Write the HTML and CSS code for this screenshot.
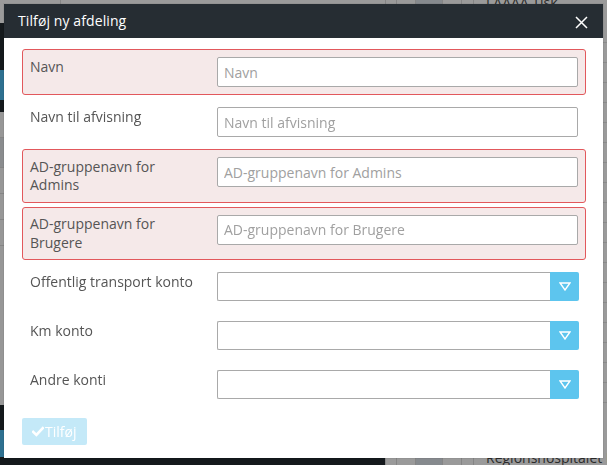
FILE: index.html
```html
<!DOCTYPE html>
<html lang="da">
<head>
<meta charset="utf-8">
<title>Tilføj ny afdeling</title>
<link rel="stylesheet" href="styles.css">
</head>
<body>
<div class="page">
  <div class="bg-left">
    <div class="bg-top"><span class="bg-num">50000</span></div>
    <div class="bg-dark"><div class="bg-blue"></div></div>
    <div class="bg-list">
      <div class="bg-row"></div><div class="bg-row tall"></div><div class="bg-row"></div><div class="bg-row"></div><div class="bg-row"></div>
    </div>
    <div class="bg-dark foot"><div class="bg-blue"></div></div>
  </div>
  <div class="bg-right">
    <div class="bg-cols top">
      <span class="c c1"></span><span class="c c2"></span><span class="c c3"></span><span class="c c4"></span><span class="c c5"></span><span class="c c6 txt">LAAAA Tisk</span>
    </div>
    <div class="bg-lines">
      <div></div><div></div><div></div><div></div><div></div><div></div><div></div><div></div><div></div><div></div><div></div><div></div><div></div><div></div><div></div><div></div><div></div><div></div><div></div>
    </div>
    <div class="bg-cols bottom">
      <span class="c c1"></span><span class="c c2"></span><span class="c c3"></span><span class="c c4"></span><span class="c c5"></span><span class="c c6 txt">Regionshospitalet I</span>
    </div>
  </div>
</div>

<div class="overlay">
  <div class="modal">
    <div class="modal-header">
      <h4 class="modal-title">Tilføj ny afdeling</h4>
      <span class="close" aria-label="Luk">
        <svg width="13" height="13" viewBox="0 0 13 13"><path d="M1 1L12 12M12 1L1 12" stroke="#fff" stroke-width="1.5" fill="none"/></svg>
      </span>
    </div>
    <form class="modal-body">
      <div class="form-row error">
        <label class="form-label">Navn</label>
        <input class="form-input" type="text" placeholder="Navn">
      </div>
      <div class="form-row">
        <label class="form-label">Navn til afvisning</label>
        <input class="form-input" type="text" placeholder="Navn til afvisning">
      </div>
      <div class="form-row error">
        <label class="form-label">AD-gruppenavn for Admins</label>
        <input class="form-input" type="text" placeholder="AD-gruppenavn for Admins">
      </div>
      <div class="form-row error">
        <label class="form-label">AD-gruppenavn for Brugere</label>
        <input class="form-input" type="text" placeholder="AD-gruppenavn for Brugere">
      </div>
      <div class="form-row sel">
        <label class="form-label">Offentlig transport konto</label>
        <div class="select"><span class="select-value"></span><span class="select-btn"><svg width="12" height="9" viewBox="0 0 12 9"><path d="M1 1H11L6 8Z" stroke="#fff" stroke-width="1.4" fill="none"/></svg></span></div>
      </div>
      <div class="form-row sel">
        <label class="form-label">Km konto</label>
        <div class="select"><span class="select-value"></span><span class="select-btn"><svg width="12" height="9" viewBox="0 0 12 9"><path d="M1 1H11L6 8Z" stroke="#fff" stroke-width="1.4" fill="none"/></svg></span></div>
      </div>
      <div class="form-row sel">
        <label class="form-label">Andre konti</label>
        <div class="select"><span class="select-value"></span><span class="select-btn"><svg width="12" height="9" viewBox="0 0 12 9"><path d="M1 1H11L6 8Z" stroke="#fff" stroke-width="1.4" fill="none"/></svg></span></div>
      </div>
    </form>
    <div class="modal-footer">
      <button class="btn-add" type="button" disabled>
        <svg width="12" height="11" viewBox="0 0 12 11"><path d="M1.2 5.8L4.4 9L10.8 2.2" stroke="#fff" stroke-width="2.6" fill="none" stroke-linecap="square"/></svg>Tilføj
      </button>
    </div>
  </div>
</div>
</body>
</html>
```

FILE: styles.css
```css
* { box-sizing: border-box; }
html, body { margin: 0; height: 100%; }
body {
  font-family: "Open Sans", "DejaVu Sans", sans-serif;
  background: #999a9b;
  overflow: hidden;
}

/* dimmed page behind the dialog */
.page {
  display: grid;
  grid-template-columns: 385px 1fr;
  height: 465px;
}
.bg-left { display: flex; flex-direction: column; }
.bg-top {
  height: 23px;
  background: #9b9b9b;
  border-left: 60px solid #9b9b9b;
  padding-left: 13px;
  box-shadow: inset 1px 0 0 #868686;
  font-size: 14px;
  line-height: 14px;
  color: #2a2a2a;
}
.bg-num { display: block; margin-top: 2px; letter-spacing: 1px; }
.bg-dark { background: #14191c; height: 89px; padding-top: 47px; }
.bg-dark .bg-blue { height: 30px; background: #2e7090; }
.bg-list { flex: 1; background: #979797; display: flex; flex-direction: column; }
.bg-row { height: 26px; border-bottom: 1px solid #858585; }
.bg-row.tall { height: 30px; background: #8a8c8e; }
.bg-dark.foot { height: 60px; padding-top: 25px; }
.bg-dark.foot .bg-blue { height: 27px; width: 54px; }

.bg-right { display: flex; flex-direction: column; background: #9a9a9a; }
.bg-cols { display: flex; height: 23px; }
.bg-cols .c { border-left: 1px solid #858585; }
.c1 { width: 11px; }
.c2 { width: 19px; }
.c3 { width: 27px; background: #868a8e; }
.c4 { width: 19px; }
.c5 { width: 12px; }
.c6 { flex: 1; padding-left: 12px; font-size: 14px; color: #2b2b2b; white-space: nowrap; overflow: hidden; }
.bg-cols.top .c6 { line-height: 6px; }
.bg-cols.bottom { height: 20px; margin-top: auto; }
.bg-cols.bottom .c6 { line-height: 20px; padding-top: 3px; }
.bg-lines { display: flex; flex-direction: column; }
.bg-lines div { height: 20px; border-bottom: 1px solid #8a8a8a; }

/* overlay & dialog */
.overlay {
  position: fixed;
  inset: 0;
  padding: 4px;
}
.modal {
  width: 599px;
  background: #fff;
  box-shadow: 0 0 0 1px rgba(0,0,0,0.05);
}
.modal-header {
  height: 34px;
  background: #262d33;
  display: flex;
  align-items: center;
  justify-content: space-between;
  padding: 0 15px 0 14px;
}
.modal-title {
  margin: 0;
  font-size: 14px;
  font-weight: 400;
  color: #fff;
  line-height: 20px;
  letter-spacing: 0.1px;
}
.close { display: flex; width: 13px; height: 13px; margin-top: 2px; }

.modal-body {
  margin: 0;
  padding: 11px 17px 0 18px;
  display: flex;
  flex-direction: column;
}
.form-row {
  display: grid;
  grid-template-columns: 187px 1fr;
  align-items: start;
  padding: 7px;
  border: 1px solid transparent;
  border-radius: 3px;
  margin-bottom: 4px;
}
.form-row.error {
  border-color: #e2585c;
  background: #f5e9e9;
}
.form-label {
  font-size: 14px;
  line-height: 18.5px;
  color: #555;
  padding-top: 0.5px;
  padding-right: 15px;
}
.form-input {
  height: 30px;
  width: 100%;
  border: 1px solid #a9a9a9;
  border-radius: 2px;
  padding: 0 6px;
  font-family: inherit;
  font-size: 14px;
  color: #555;
  background: #fff;
  outline: none;
}
.form-input::placeholder { color: #a0a0a0; }

.select {
  display: flex;
  height: 29px;
}
.select-value {
  flex: 1;
  border: 1px solid #a9a9a9;
  border-right: 0;
  border-radius: 2px 0 0 2px;
  background: #fff;
}
.select-btn {
  width: 29px;
  background: #5dc5ee;
  border-radius: 0 2px 2px 0;
  display: flex;
  align-items: center;
  justify-content: center;
  margin-right: -1px;
}

.modal-footer {
  padding: 7px 18px 13px;
}
.btn-add {
  display: flex;
  align-items: center;
  gap: 1px;
  height: 27px;
  width: 65px;
  padding: 0 0 0 10px;
  border: 0;
  border-radius: 2px;
  background: #c4e9f8;
  color: #fff;
  font-family: inherit;
  font-size: 14px;
}
```
